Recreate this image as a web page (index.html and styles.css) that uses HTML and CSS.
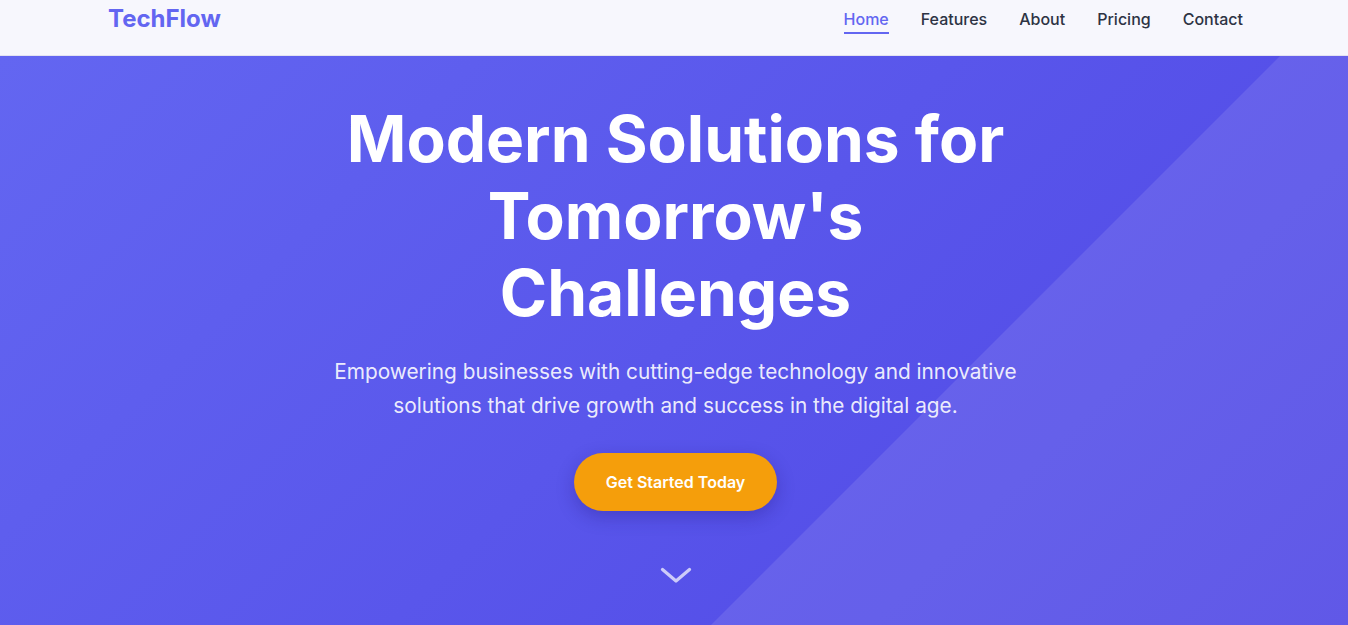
FILE: index.html
```html
<!DOCTYPE html>
<html lang="en">
<head>
<meta charset="utf-8">
<title>TechFlow</title>
<link rel="stylesheet" href="styles.css">
</head>
<body>
<header class="site-header">
  <div class="header-inner">
    <a class="logo" href="#">TechFlow</a>
    <nav class="nav">
      <a class="nav-link active" href="#">Home</a>
      <a class="nav-link" href="#">Features</a>
      <a class="nav-link" href="#">About</a>
      <a class="nav-link" href="#">Pricing</a>
      <a class="nav-link" href="#">Contact</a>
    </nav>
  </div>
</header>
<section class="hero">
  <div class="hero-content">
    <h1 class="hero-title">Modern Solutions for Tomorrow's Challenges</h1>
    <p class="hero-text">Empowering businesses with cutting-edge technology and innovative solutions that drive growth and success in the digital age.</p>
    <a class="cta" href="#">Get Started Today</a>
  </div>
  <div class="scroll-hint">
    <svg width="32" height="16" viewBox="0 0 32 16"><polyline points="2.5,2.5 16,14 29.5,2.5" fill="none" stroke="currentColor" stroke-width="3.2" stroke-linecap="round" stroke-linejoin="round"/></svg>
  </div>
</section>
</body>
</html>
```

FILE: styles.css
```css
* { box-sizing: border-box; }
html, body { margin: 0; padding: 0; }
body {
  font-family: Inter, "Noto Sans", "Liberation Sans", sans-serif;
  color: #1f2937;
  overflow: hidden;
}
a { text-decoration: none; }

.site-header {
  height: 56px;
  background: #f7f7fd;
  border-bottom: 1px solid #e3e3f1;
}
.header-inner {
  max-width: 1200px;
  margin: 0 auto;
  padding: 1px 31px 0 34px;
  display: flex;
  justify-content: space-between;
  align-items: flex-start;
}
.logo {
  font-size: 24px;
  line-height: 36px;
  font-weight: 700;
  color: #6366f1;
}
.nav {
  display: flex;
  gap: 32px;
  padding-top: 6px;
}
.nav-link {
  position: relative;
  font-size: 16px;
  line-height: 24px;
  font-weight: 500;
  color: #2d3344;
  padding-bottom: 3px;
}
.nav-link.active { color: #6366f1; }
.nav-link.active::after {
  content: "";
  position: absolute;
  left: 0;
  right: 0;
  bottom: 0;
  height: 2px;
  background: #6366f1;
}

.hero {
  position: relative;
  height: 569px;
  background: linear-gradient(135deg, #6366f1 0%, #4f46e5 100%);
  display: flex;
  flex-direction: column;
  align-items: center;
  padding: 45px 0 0 3px;
  overflow: hidden;
}
.hero::before {
  content: "";
  position: absolute;
  inset: 0;
  background: rgba(255, 255, 255, 0.1);
  clip-path: polygon(1280px 0, 100% 0, 100% 100%, 711px 100%);
}
.hero-content {
  position: relative;
  max-width: 720px;
  display: flex;
  flex-direction: column;
  align-items: center;
  text-align: center;
}
.hero-title {
  margin: 0 0 24px;
  font-size: 64px;
  line-height: 76.8px;
  font-weight: 700;
  color: #ffffff;
}
.hero-text {
  margin: 0 0 30px;
  font-size: 20.8px;
  line-height: 34px;
  color: rgba(255, 255, 255, 0.9);
}
.cta {
  display: inline-block;
  background: #f59e0b;
  color: #ffffff;
  font-size: 16px;
  line-height: 26px;
  font-weight: 600;
  padding: 16px 32px;
  border-radius: 999px;
  box-shadow: 0 6px 18px rgba(30, 20, 120, 0.3);
}
.scroll-hint {
  position: absolute;
  left: 50%;
  bottom: 42px;
  transform: translateX(-50%);
  margin-left: 2px;
  color: rgba(255, 255, 255, 0.7);
  display: flex;
}
```
